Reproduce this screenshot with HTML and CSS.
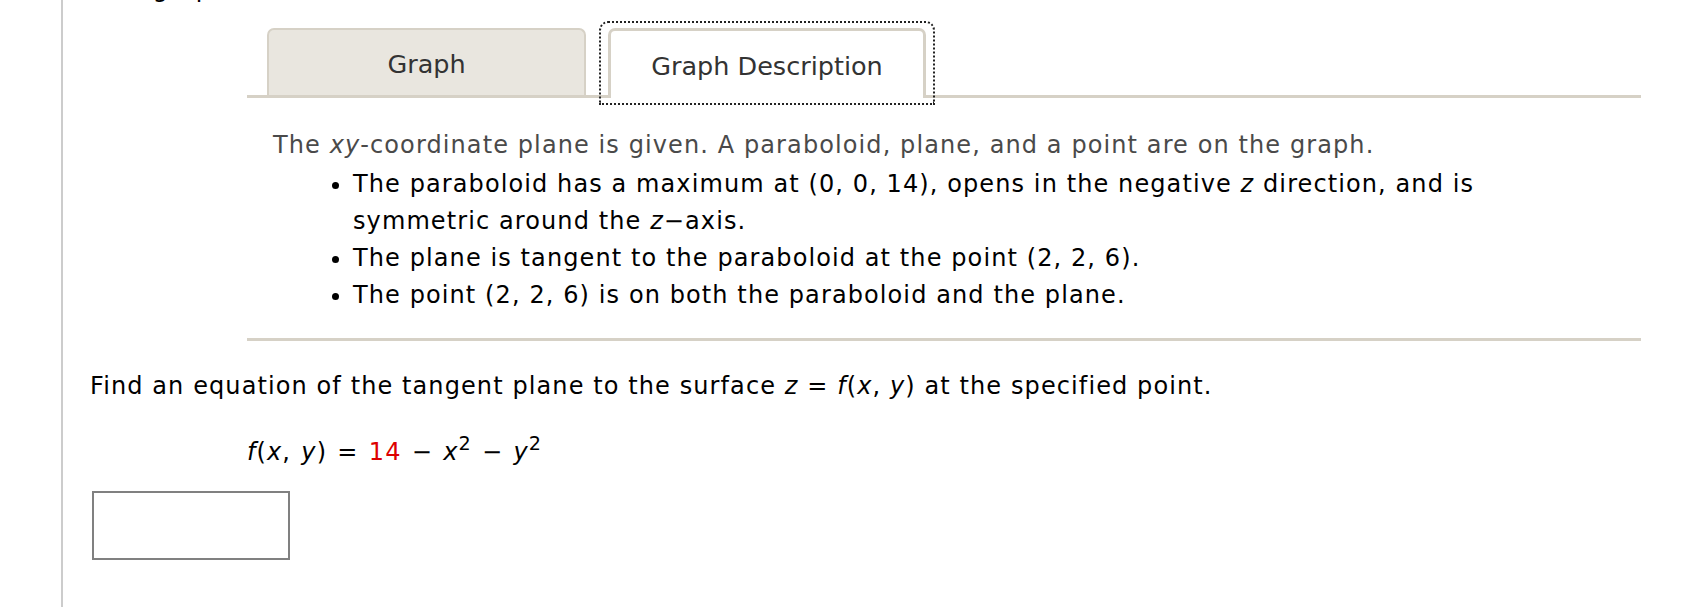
FILE: index.html
```html
<!DOCTYPE html>
<html>
<head>
<meta charset="utf-8">
<link rel="stylesheet" href="styles.css">
</head>
<body>
<div class="page">
  <div class="intro">The graph</div>
  <div class="graph-panel">
    <div class="tabs">
      <div class="tab">Graph</div>
      <div class="tab tab-active">Graph Description</div>
    </div>
    <div class="desc">
      <p class="desc-lead">The <i>xy</i>-coordinate plane is given. A paraboloid, plane, and a point are on the graph.</p>
      <ul class="desc-list">
        <li>The paraboloid has a maximum at (0, 0, 14), opens in the negative <i>z</i> direction, and is symmetric around the <i>z</i>&minus;axis.</li>
        <li>The plane is tangent to the paraboloid at the point (2, 2, 6).</li>
        <li>The point (2, 2, 6) is on both the paraboloid and the plane.</li>
      </ul>
    </div>
  </div>
  <p class="question">Find an equation of the tangent plane to the surface <i>z</i> = <i>f</i>(<i>x</i>, <i>y</i>) at the specified point.</p>
  <p class="formula"><i>f</i>(<i>x</i>, <i>y</i>) = <span class="red">14</span> &minus; <i>x</i><sup>2</sup> &minus; <i>y</i><sup>2</sup></p>
  <div class="answer-box"></div>
</div>
</body>
</html>
```
FILE: styles.css
```css
html, body {
  margin: 0;
  padding: 0;
  background: #fff;
}
body {
  font-family: "DejaVu Sans", Verdana, sans-serif;
  font-size: 24px;
  letter-spacing: 1.1px;
  color: #000;
  overflow: hidden;
}
.page {
  display: flow-root;
  margin-left: 61px;
  border-left: 2px solid #cccccc;
  padding-left: 27px;
  height: 607px;
  box-sizing: border-box;
}
.intro {
  margin-top: -23px;
  height: 24px;
  line-height: 24px;
  padding-left: 6px;
}
.graph-panel {
  margin-top: 27px;
  margin-left: 157px;
  margin-right: 56px;
}
.tabs {
  display: flex;
  align-items: flex-end;
  height: 67px;
  padding-left: 20px;
  border-bottom: 3px solid #d6d1c6;
}
.tab {
  box-sizing: border-box;
  width: 319px;
  height: 67px;
  border: 2px solid #d6d1c6;
  border-bottom: 0;
  border-radius: 7px 7px 0 0;
  background: #e9e6df;
  color: #333;
  font-size: 25.5px;
  letter-spacing: 0;
  display: flex;
  align-items: center;
  justify-content: center;
  padding-top: 2px;
}
.tab-active {
  position: relative;
  margin-left: 22px;
  width: 318px;
  height: 70px;
  margin-bottom: -3px;
  border: 3px solid #d6d1c6;
  border-bottom: 0;
  background: #fff;
  padding-top: 3px;
}
.tab-active::after {
  content: "";
  position: absolute;
  left: -12px;
  right: -12px;
  top: -10px;
  bottom: -7px;
  border: 2px dotted #222;
  border-radius: 9px 9px 0 0;
}
.desc {
  padding: 29px 80px 24px 26px;
  border-bottom: 3px solid #d6d1c6;
  line-height: 37px;
}
.desc-lead {
  margin: 0;
  color: #4a4a4a;
}
.desc-list {
  margin: 2px 0 0 0;
  padding-left: 80px;
  list-style: disc;
}
.question {
  margin: 27px 0 0 0;
  line-height: 37px;
}
.formula {
  margin: 29px 0 0 0;
  padding-left: 157px;
  line-height: 37px;
  word-spacing: 1.5px;
}
.formula sup {
  font-size: 0.8em;
  line-height: 0;
  vertical-align: 0.5em;
}
.red {
  color: #dd0000;
}
.answer-box {
  margin: 20px 0 0 2px;
  width: 198px;
  height: 69px;
  box-sizing: border-box;
  border: 2px solid #808080;
}
```
